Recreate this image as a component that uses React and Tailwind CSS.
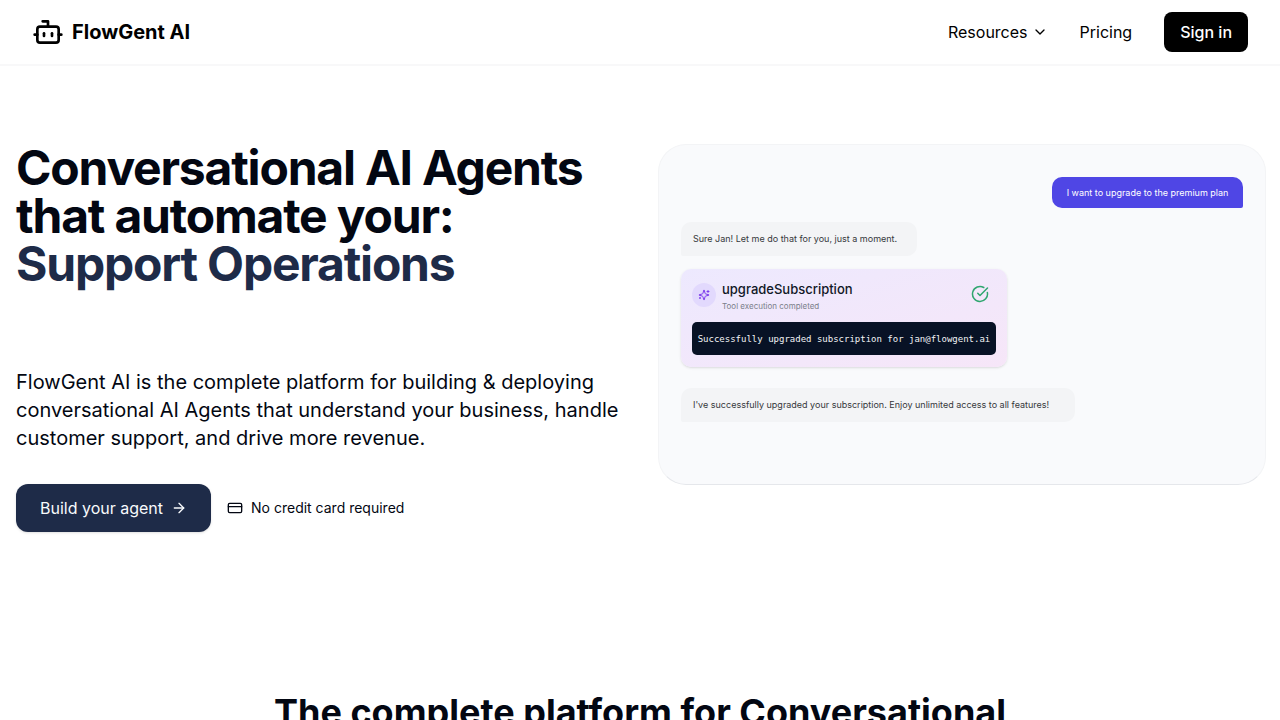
import { Bot, ChevronDown, ArrowRight, CreditCard, CircleCheckBig } from "lucide-react";

function SparkleIcon() {
  return (
    <svg viewBox="0 0 24 24" className="size-3" fill="none" stroke="currentColor" strokeWidth="2" strokeLinecap="round" strokeLinejoin="round" aria-hidden="true">
      <path d="M9.937 15.5A2 2 0 0 0 8.5 14.063l-6.135-1.582a.5.5 0 0 1 0-.962L8.5 9.936A2 2 0 0 0 9.937 8.5l1.582-6.135a.5.5 0 0 1 .963 0L14.063 8.5A2 2 0 0 0 15.5 9.937l6.135 1.581a.5.5 0 0 1 0 .964L15.5 14.063a2 2 0 0 0-1.437 1.437l-1.582 6.135a.5.5 0 0 1-.963 0z" />
      <path d="M20 3v4M22 5h-4M4 17v2M5 18H3" />
    </svg>
  );
}

function ChatDemo() {
  return (
    <div className="flex min-h-[341px] flex-col items-start rounded-[28px] border border-gray-100 border-b-gray-200 bg-[#f9fafc] px-[22px] pt-8 text-[9px] leading-3 text-[#36383c]">
      <p className="flex h-[31px] min-w-[191px] items-center justify-center self-end rounded-[10px] rounded-br-[2px] bg-[#4f46e5] px-3 text-white">I want to upgrade to the premium plan</p>
      <p className="mt-[14px] flex h-[34px] min-w-[236px] items-center rounded-[10px] rounded-bl-[2px] bg-[#f3f4f6] px-3">Sure Jan! Let me do that for you, just a moment.</p>
      <section className="mt-[13px] w-[326px] rounded-[10px] bg-linear-to-br from-[#ede9fe] to-[#f6e6f8] px-[11px] py-3 shadow-sm">
        <div className="flex items-start">
          <span className="mt-0.5 flex size-6 items-center justify-center rounded-full bg-[#e2d9fd] text-[#7c3aed]"><SparkleIcon /></span>
          <div className="ml-[6px] flex-1">
            <h2 className="text-[13px] leading-4 font-medium text-[#111827]">upgradeSubscription</h2>
            <p className="mt-[3px] text-[8px] leading-3 text-[#7b7f8a]">Tool execution completed</p>
          </div>
          <CircleCheckBig size={18} className="mt-1 mr-[7px] text-[#2fa66f]" />
        </div>
        <p className="mt-[10px] flex h-[33px] items-center justify-center rounded-[5px] bg-[#081225] font-['DejaVu_Sans_Mono',monospace] whitespace-nowrap text-gray-100">Successfully upgraded subscription for jan@flowgent.ai</p>
      </section>
      <p className="mt-[21px] flex h-[34px] min-w-[394px] items-center rounded-[10px] rounded-bl-[2px] bg-[#f3f4f6] px-3">I've successfully upgraded your subscription. Enjoy unlimited access to all features!</p>
    </div>
  );
}

export default function App() {
  return (
    <div className="h-screen overflow-hidden bg-white font-['Inter',sans-serif] text-[#030712]">
      <header className="flex h-[66px] items-center justify-between border-b-2 border-[#f8f8f9] px-8 text-black">
        <a href="#" className="flex items-center gap-2 text-xl font-bold"><Bot size={32} />FlowGent AI</a>
        <nav className="flex items-center gap-8">
          <button className="flex items-center gap-1">Resources<ChevronDown size={16} /></button>
          <a href="#">Pricing</a>
          <button className="h-10 rounded-lg bg-black px-4 font-medium text-white">Sign in</button>
        </nav>
      </header>
      <main>
        <section className="grid grid-cols-2 items-start gap-[34px] pt-[78px] pr-[14px] pl-4">
          <div>
            <h1 className="text-5xl leading-none font-bold tracking-tight">
              <span className="block">Conversational AI Agents</span>
              <span className="block">that automate your:</span>
              <span className="block text-[#1e2b48]">Support Operations</span>
            </h1>
            <p className="mt-20 text-xl leading-7">FlowGent AI is the complete platform for building &amp; deploying conversational AI Agents that understand your business, handle customer support, and drive more revenue.</p>
            <div className="mt-8 flex items-center gap-4">
              <button className="flex h-12 items-center gap-2 rounded-xl bg-[#1e2b48] px-6 text-slate-50 shadow-sm">Build your agent<ArrowRight size={16} /></button>
              <span className="flex items-center gap-2 text-sm"><CreditCard size={16} />No credit card required</span>
            </div>
          </div>
          <ChatDemo />
        </section>
        <section className="mt-40 px-4">
          <h2 className="mx-auto max-w-3xl text-center text-4xl leading-10 font-bold">The complete platform for Conversational AI</h2>
        </section>
      </main>
    </div>
  );
}
